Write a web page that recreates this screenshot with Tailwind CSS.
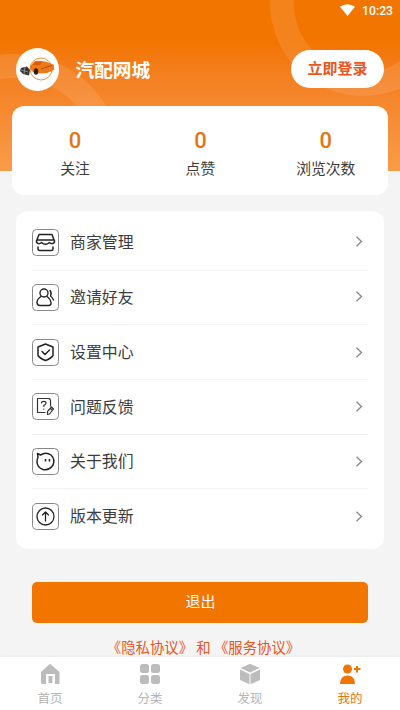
<!DOCTYPE html>
<html lang="zh-CN">
<head>
<meta charset="utf-8">
<title>汽配网城</title>
<script src="https://cdn.jsdelivr.net/npm/@tailwindcss/browser@4"></script>
</head>
<body class="w-[400px] h-[710px] overflow-hidden bg-[#f4f4f4] font-['Noto_Sans_CJK_SC',sans-serif] text-[#3c3c3c]">
<div class="relative flex h-[710px] flex-col">
  <div class="absolute inset-x-0 top-0 h-[171px] overflow-hidden bg-linear-to-b from-[#f27500] from-25% to-[#f99b48]">
    <svg class="h-full w-full" viewBox="0 0 400 171" fill="none" stroke="#fff" stroke-opacity=".1" stroke-width="24">
      <circle cx="15" cy="160" r="94"/><circle cx="363" cy="3" r="81"/>
    </svg>
  </div>
  <div class="relative flex h-[22px] shrink-0 items-center justify-end pr-[7px] text-white">
    <svg class="mr-[7px] mt-[-2px] h-[12px] w-[15px]" viewBox="0 0 15 12" fill="#fff"><path d="M0 2.8Q7.500-2.500 15 2.800L7.500 12Z"/></svg>
    <span class="font-[Roboto] text-[12.2px] leading-[22px] font-medium">10:23</span>
  </div>
  <header class="relative flex h-[84px] shrink-0 items-start pl-4 pr-4">
    <div class="mt-[26px] size-[43px] rounded-full bg-white">
      <svg viewBox="0 0 43 43">
        <circle cx="25" cy="21" r="11" fill="none" stroke="#ed9248" stroke-width="1"/>
        <path d="M14 18L19 13Q28 12 35 15.500L38 17V22L31 25L22 25.500Q17 25 14 21Z" fill="#f07818"/>
        <path d="M19 14L26 13.500L24 17L17 17Z" fill="#d85c08"/>
        <path d="M25 21L36 17.500" stroke="#a64405" stroke-width=".8"/>
        <path d="M5 20L11 18.500L14 22L13 27.500L7 26L4 23Z" fill="#353535"/>
        <path d="M5 22L12 24M9 19L8 26" stroke="#aaa" stroke-width=".7"/>
        <ellipse cx="20" cy="23.500" rx="2.200" ry="3.300" fill="#222"/>
      </svg>
    </div>
    <h1 class="ml-[16.500px] mt-[33px] text-[18.700px] leading-[28px] font-bold text-white">汽配网城</h1>
    <button class="ml-auto mt-7 h-[38px] w-[93px] rounded-full bg-white pb-[2px] text-[15px] leading-[34px] font-bold text-[#e9561d]">立即登录</button>
  </header>
  <section class="relative ml-[12.400px] mr-[11.600px] grid h-[89px] shrink-0 grid-cols-3 rounded-xl bg-white text-center">
    <div><div class="mt-[20px] h-[29px] font-[Roboto] text-[22px] leading-[29px] font-medium text-[#e37514]">0</div><div class="text-[14.800px] leading-[26px]">关注</div></div>
    <div><div class="mt-[20px] h-[29px] font-[Roboto] text-[22px] leading-[29px] font-medium text-[#e37514]">0</div><div class="text-[14.800px] leading-[26px]">点赞</div></div>
    <div><div class="mt-[20px] h-[29px] font-[Roboto] text-[22px] leading-[29px] font-medium text-[#e37514]">0</div><div class="text-[14.800px] leading-[26px]">浏览次数</div></div>
  </section>
  <section class="relative mx-4 mt-[16px] h-[338px] shrink-0 rounded-xl bg-white px-4 pt-[5px] text-[15.900px]">
    <div class="flex h-[54.700px] items-center border-b border-[#f1f1f1]">
      <svg class="size-[27px]" viewBox="0 0 27 27" fill="none" stroke="#222" stroke-width="1.5" stroke-linejoin="round"><rect x=".5" y=".5" width="26" height="26" rx="4" stroke="#888" stroke-width="1"/><path d="M7 5.500H20L22.500 12V13Q20.500 16 17.500 13.500Q13.500 17 9.500 13.500Q6.500 16 4.500 13V12ZM5 11H22M6 17.500V20Q6 21.500 7.500 21.500H19.500Q21 21.500 21 20V17.500"/></svg>
      <span class="ml-[11px] -mt-px">商家管理</span><svg class="ml-auto mr-[5px] mt-[-2px] h-[11px] w-[8px]" viewBox="0 0 8 11" fill="none" stroke="#888" stroke-width="1.3"><path d="M1.500.7L6.500 5.500L1.500 10.300"/></svg>
    </div>
    <div class="flex h-[54.700px] items-center border-b border-[#f1f1f1]">
      <svg class="size-[27px]" viewBox="0 0 27 27" fill="none" stroke="#222" stroke-width="1.4" stroke-linecap="round" stroke-linejoin="round"><rect x=".5" y=".5" width="26" height="26" rx="4" stroke="#888" stroke-width="1"/><circle cx="12" cy="9" r="4"/><path d="M9 12.500Q5 15 5 18.500Q5 21.500 8 21.500H16.500Q19.500 21.500 19 18.500Q18.500 15 15 12.500M18 6.500Q20 9 18.500 12Q20.500 13.500 21.500 16"/></svg>
      <span class="ml-[11px] -mt-px">邀请好友</span><svg class="ml-auto mr-[5px] mt-[-2px] h-[11px] w-[8px]" viewBox="0 0 8 11" fill="none" stroke="#888" stroke-width="1.3"><path d="M1.500.7L6.500 5.500L1.500 10.300"/></svg>
    </div>
    <div class="flex h-[54.700px] items-center border-b border-[#f1f1f1]">
      <svg class="size-[27px]" viewBox="0 0 27 27" fill="none" stroke="#222" stroke-width="1.5" stroke-linecap="round" stroke-linejoin="round"><rect x=".5" y=".5" width="26" height="26" rx="4" stroke="#888" stroke-width="1"/><path d="M13.500 5L21 8V16.500Q19 19.500 13.500 21.500Q8 19.500 6 16.500V8ZM10 12.500L13 15.500L17.500 11"/></svg>
      <span class="ml-[11px]">设置中心</span><svg class="ml-auto mr-[5px] h-[11px] w-[8px]" viewBox="0 0 8 11" fill="none" stroke="#888" stroke-width="1.3"><path d="M1.500.7L6.500 5.500L1.500 10.300"/></svg>
    </div>
    <div class="flex h-[54.700px] items-center border-b border-[#f1f1f1]">
      <svg class="size-[27px]" viewBox="0 0 27 27" fill="none" stroke="#333" stroke-width="1.2" stroke-linecap="round" stroke-linejoin="round"><rect x=".5" y=".5" width="26" height="26" rx="4" stroke="#888" stroke-width="1"/><path d="M18.500 13V7L17 5.500H5.500V19.500H13M9.500 10Q9.500 8.300 11.700 8.300Q14 8.300 14 10Q14 11.300 11.800 12.500V13.500M11.800 16V16.200M15.500 18.500L19.500 14L21.500 16L17.500 21L15.500 21.500ZM18.500 15.500L20 17"/></svg>
      <span class="ml-[11px]">问题反馈</span><svg class="ml-auto mr-[5px] h-[11px] w-[8px]" viewBox="0 0 8 11" fill="none" stroke="#888" stroke-width="1.3"><path d="M1.500.7L6.500 5.500L1.500 10.300"/></svg>
    </div>
    <div class="flex h-[54.700px] items-center border-b border-[#f1f1f1]">
      <svg class="size-[27px]" viewBox="0 0 27 27" fill="none" stroke="#222" stroke-width="1.5" stroke-linejoin="round"><rect x=".5" y=".5" width="26" height="26" rx="4" stroke="#888" stroke-width="1"/><path d="M8.500 7Q14 3.500 19 7Q23.500 11.500 21 17Q17.500 22.500 11 21.500Q5 19.500 5 13.500Q5 11.500 6 9.500L5.500 5.500Z"/><path d="M13.500 11V13.500M17.500 11V13.500" stroke-width="1.600"/></svg>
      <span class="ml-[11px] -mt-px">关于我们</span><svg class="ml-auto mr-[5px] h-[11px] w-[8px]" viewBox="0 0 8 11" fill="none" stroke="#888" stroke-width="1.3"><path d="M1.500.7L6.500 5.500L1.500 10.300"/></svg>
    </div>
    <div class="flex h-[54.700px] items-center">
      <svg class="size-[27px]" viewBox="0 0 27 27" fill="none" stroke="#222" stroke-width="1.3" stroke-linecap="round" stroke-linejoin="round"><rect x=".5" y=".5" width="26" height="26" rx="4" stroke="#888" stroke-width="1"/><circle cx="13.500" cy="13.500" r="8.500"/><path d="M13.500 18V9.500M10.500 12L13.500 9L16.500 12"/></svg>
      <span class="ml-[11px] -mt-px">版本更新</span><svg class="ml-auto mr-[5px] h-[11px] w-[8px]" viewBox="0 0 8 11" fill="none" stroke="#888" stroke-width="1.3"><path d="M1.500.7L6.500 5.500L1.500 10.300"/></svg>
    </div>
  </section>
  <button class="ml-[32.400px] mr-[31.600px] mt-[33px] h-[41px] shrink-0 rounded-[5px] bg-[#f27500] pb-[4px] text-[15px] leading-[37px] text-white">退出</button>
  <p class="mt-[12px] h-[22px] shrink-0 text-center text-[14.400px] leading-[23px] whitespace-pre text-[#e9561d] pl-[7px]">《隐私协议》 和 《服务协议》</p>
  <nav class="absolute inset-x-0 bottom-0 grid h-[53px] grid-cols-4 bg-white text-center text-[12.500px] leading-[18px] text-[#b5b5b5] shadow-[0_-1px_2px_rgba(0,0,0,0.04)]">
    <div class="flex flex-col items-center pt-[6px]"><svg class="size-[22px]" viewBox="0 0 22 22" fill="#bcbcbc"><path d="M11 .8L20.500 9V20Q20.500 21 19.500 21H16V11H7V21H3Q2 21 2 20V9Z"/><path d="M9.500 13H13.500V20H9.500Z"/></svg><span class="mt-[4px]">首页</span></div>
    <div class="flex flex-col items-center pt-[6px]"><svg class="size-[22px]" viewBox="0 0 22 22" fill="#bcbcbc"><rect x="1" y="1" width="9" height="9" rx="2.500"/><rect x="12" y="1" width="9" height="9" rx="2.500"/><rect x="1" y="12" width="9" height="9" rx="2.500"/><rect x="12" y="12" width="9" height="9" rx="2.500"/></svg><span class="mt-[4px]">分类</span></div>
    <div class="flex flex-col items-center pt-[6px]"><svg class="size-[22px]" viewBox="0 0 22 22" fill="#bcbcbc"><path d="M11 .8L20.500 5L11 9.500L1.500 5Z"/><path d="M1 6.500L10.500 11V21.200L1 17Z"/><path d="M21 6.500L11.500 11V21.200L21 17Z"/></svg><span class="mt-[4px]">发现</span></div>
    <div class="flex flex-col items-center pt-[6px] text-[#e37514]"><svg class="size-[22px]" viewBox="0 0 22 22" fill="#ef7605"><circle cx="8.500" cy="6" r="4.500"/><path d="M1 21Q1 12.500 8.500 12.500Q16 12.500 16 21ZM17 3H19V5H21.500V7H19V9.500H17V7H15V5H17Z"/></svg><span class="mt-[4px]">我的</span></div>
  </nav>
</div>
</body>
</html>
